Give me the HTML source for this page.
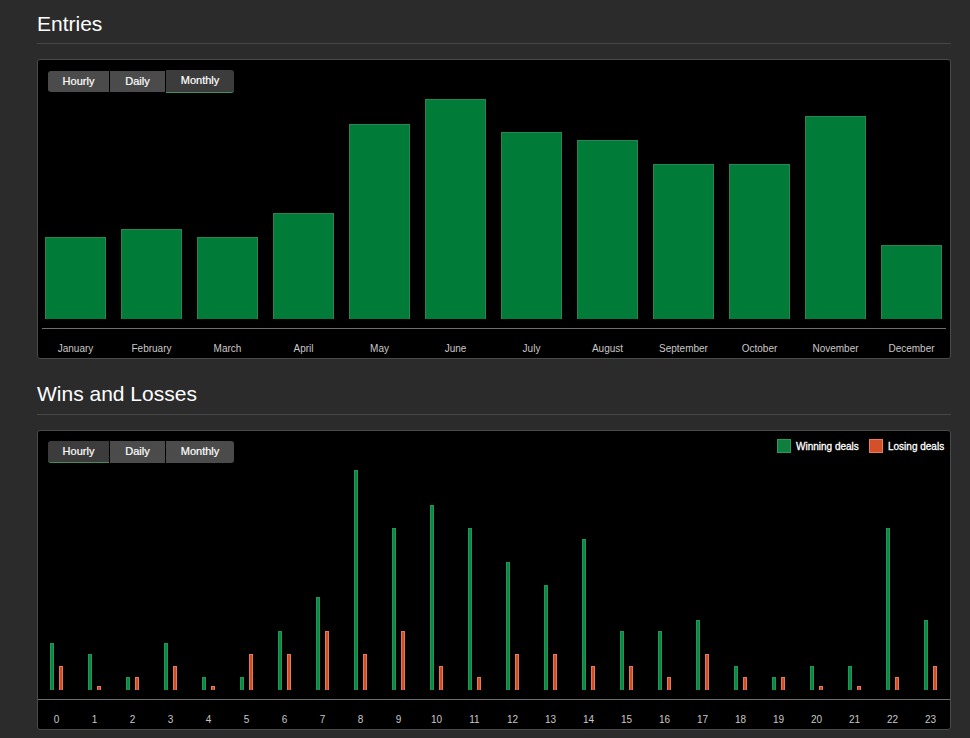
<!DOCTYPE html>
<html><head><meta charset="utf-8"><style>
*{margin:0;padding:0;box-sizing:border-box}
html,body{width:970px;height:738px;overflow:hidden;background:#2b2b2b;font-family:"Liberation Sans",sans-serif;position:relative}
.a{position:absolute}
h2{position:absolute;left:37px;font-size:21px;font-weight:normal;color:#fff;line-height:1;white-space:nowrap}
.hr{position:absolute;left:37px;width:914px;height:1px;background:#474747}
.panel{position:absolute;left:37px;width:914px;background:#000;border:1px solid #4a4a4a;border-radius:3px}
.btn{position:absolute;background:#4b4b4b;color:#fff;-webkit-text-stroke:0.2px #fff;font-size:11px;line-height:1;text-align:center;white-space:nowrap}
.btn span{position:absolute;left:0;right:0}
.btn.act{background:#3c3c3c;border-bottom:1px solid #3e9160}
.bar1{position:absolute;width:61px;background:#007b38;border:1px solid #2a8453;border-bottom:none}
.g{position:absolute;width:4px;background:#0a8a40;border:1px solid #22965a;border-bottom:none}
.o{position:absolute;width:4px;background:#cf4c25;border:1px solid #e67a52;border-bottom:none}
.lbl{position:absolute;font-size:10px;color:#c8c8c8;line-height:1;white-space:nowrap;text-align:center;width:76px}
.axis{position:absolute;height:1px;background:#6e6e6e}
</style></head><body>
<h2 style="top:13px">Entries</h2>
<div class="hr" style="top:43px"></div>
<div class="panel" style="top:59px;height:300px"></div>
<div class="btn" style="left:48px;top:71px;width:61px;height:21px;border-radius:3px 0 0 3px"><span style="top:5px">Hourly</span></div>
<div class="btn" style="left:110px;top:71px;width:55px;height:21px"><span style="top:5px">Daily</span></div>
<div class="btn act" style="left:166px;top:70px;width:68px;height:23px;border-radius:0 3px 3px 0"><span style="top:5px">Monthly</span></div>
<div class="bar1" style="left:45px;top:237px;height:82px"></div>
<div class="lbl" style="left:37.5px;top:344px">January</div>
<div class="bar1" style="left:121px;top:229px;height:90px"></div>
<div class="lbl" style="left:113.5px;top:344px">February</div>
<div class="bar1" style="left:197px;top:237px;height:82px"></div>
<div class="lbl" style="left:189.5px;top:344px">March</div>
<div class="bar1" style="left:273px;top:213px;height:106px"></div>
<div class="lbl" style="left:265.5px;top:344px">April</div>
<div class="bar1" style="left:349px;top:124px;height:195px"></div>
<div class="lbl" style="left:341.5px;top:344px">May</div>
<div class="bar1" style="left:425px;top:99px;height:220px"></div>
<div class="lbl" style="left:417.5px;top:344px">June</div>
<div class="bar1" style="left:501px;top:132px;height:187px"></div>
<div class="lbl" style="left:493.5px;top:344px">July</div>
<div class="bar1" style="left:577px;top:140px;height:179px"></div>
<div class="lbl" style="left:569.5px;top:344px">August</div>
<div class="bar1" style="left:653px;top:164px;height:155px"></div>
<div class="lbl" style="left:645.5px;top:344px">September</div>
<div class="bar1" style="left:729px;top:164px;height:155px"></div>
<div class="lbl" style="left:721.5px;top:344px">October</div>
<div class="bar1" style="left:805px;top:116px;height:203px"></div>
<div class="lbl" style="left:797.5px;top:344px">November</div>
<div class="bar1" style="left:881px;top:245px;height:74px"></div>
<div class="lbl" style="left:873.5px;top:344px">December</div>
<div class="axis" style="left:42px;top:328px;width:904px"></div>
<h2 style="top:383px">Wins and Losses</h2>
<div class="hr" style="top:414px"></div>
<div class="panel" style="top:430px;height:300px"></div>
<div class="btn act" style="left:48px;top:441px;width:61px;height:22px;border-radius:3px 0 0 3px"><span style="top:5px">Hourly</span></div>
<div class="btn" style="left:110px;top:441px;width:55px;height:22px"><span style="top:5px">Daily</span></div>
<div class="btn" style="left:166px;top:441px;width:68px;height:22px;border-radius:0 3px 3px 0"><span style="top:5px">Monthly</span></div>
<div class="a" style="left:777px;top:439px;width:14px;height:14px;background:#0e7f3e;border:1px solid #2b9a5a"></div>
<div class="a" style="left:796px;top:442px;font-size:10px;color:#fff;line-height:1;white-space:nowrap;-webkit-text-stroke:0.3px #fff">Winning deals</div>
<div class="a" style="left:869px;top:439px;width:14px;height:14px;background:#d4502a;border:1px solid #ec7d55"></div>
<div class="a" style="left:888px;top:442px;font-size:10px;color:#fff;line-height:1;white-space:nowrap;-webkit-text-stroke:0.3px #fff">Losing deals</div>
<div class="g" style="left:50px;top:643px;height:47px"></div>
<div class="o" style="left:59px;top:666px;height:24px"></div>
<div class="lbl" style="left:18.5px;top:715px">0</div>
<div class="g" style="left:88px;top:654px;height:36px"></div>
<div class="o" style="left:97px;top:686px;height:4px"></div>
<div class="lbl" style="left:56.5px;top:715px">1</div>
<div class="g" style="left:126px;top:677px;height:13px"></div>
<div class="o" style="left:135px;top:677px;height:13px"></div>
<div class="lbl" style="left:94.5px;top:715px">2</div>
<div class="g" style="left:164px;top:643px;height:47px"></div>
<div class="o" style="left:173px;top:666px;height:24px"></div>
<div class="lbl" style="left:132.5px;top:715px">3</div>
<div class="g" style="left:202px;top:677px;height:13px"></div>
<div class="o" style="left:211px;top:686px;height:4px"></div>
<div class="lbl" style="left:170.5px;top:715px">4</div>
<div class="g" style="left:240px;top:677px;height:13px"></div>
<div class="o" style="left:249px;top:654px;height:36px"></div>
<div class="lbl" style="left:208.5px;top:715px">5</div>
<div class="g" style="left:278px;top:631px;height:59px"></div>
<div class="o" style="left:287px;top:654px;height:36px"></div>
<div class="lbl" style="left:246.5px;top:715px">6</div>
<div class="g" style="left:316px;top:597px;height:93px"></div>
<div class="o" style="left:325px;top:631px;height:59px"></div>
<div class="lbl" style="left:284.5px;top:715px">7</div>
<div class="g" style="left:354px;top:470px;height:220px"></div>
<div class="o" style="left:363px;top:654px;height:36px"></div>
<div class="lbl" style="left:322.5px;top:715px">8</div>
<div class="g" style="left:392px;top:528px;height:162px"></div>
<div class="o" style="left:401px;top:631px;height:59px"></div>
<div class="lbl" style="left:360.5px;top:715px">9</div>
<div class="g" style="left:430px;top:505px;height:185px"></div>
<div class="o" style="left:439px;top:666px;height:24px"></div>
<div class="lbl" style="left:398.5px;top:715px">10</div>
<div class="g" style="left:468px;top:528px;height:162px"></div>
<div class="o" style="left:477px;top:677px;height:13px"></div>
<div class="lbl" style="left:436.5px;top:715px">11</div>
<div class="g" style="left:506px;top:562px;height:128px"></div>
<div class="o" style="left:515px;top:654px;height:36px"></div>
<div class="lbl" style="left:474.5px;top:715px">12</div>
<div class="g" style="left:544px;top:585px;height:105px"></div>
<div class="o" style="left:553px;top:654px;height:36px"></div>
<div class="lbl" style="left:512.5px;top:715px">13</div>
<div class="g" style="left:582px;top:539px;height:151px"></div>
<div class="o" style="left:591px;top:666px;height:24px"></div>
<div class="lbl" style="left:550.5px;top:715px">14</div>
<div class="g" style="left:620px;top:631px;height:59px"></div>
<div class="o" style="left:629px;top:666px;height:24px"></div>
<div class="lbl" style="left:588.5px;top:715px">15</div>
<div class="g" style="left:658px;top:631px;height:59px"></div>
<div class="o" style="left:667px;top:677px;height:13px"></div>
<div class="lbl" style="left:626.5px;top:715px">16</div>
<div class="g" style="left:696px;top:620px;height:70px"></div>
<div class="o" style="left:705px;top:654px;height:36px"></div>
<div class="lbl" style="left:664.5px;top:715px">17</div>
<div class="g" style="left:734px;top:666px;height:24px"></div>
<div class="o" style="left:743px;top:677px;height:13px"></div>
<div class="lbl" style="left:702.5px;top:715px">18</div>
<div class="g" style="left:772px;top:677px;height:13px"></div>
<div class="o" style="left:781px;top:677px;height:13px"></div>
<div class="lbl" style="left:740.5px;top:715px">19</div>
<div class="g" style="left:810px;top:666px;height:24px"></div>
<div class="o" style="left:819px;top:686px;height:4px"></div>
<div class="lbl" style="left:778.5px;top:715px">20</div>
<div class="g" style="left:848px;top:666px;height:24px"></div>
<div class="o" style="left:857px;top:686px;height:4px"></div>
<div class="lbl" style="left:816.5px;top:715px">21</div>
<div class="g" style="left:886px;top:528px;height:162px"></div>
<div class="o" style="left:895px;top:677px;height:13px"></div>
<div class="lbl" style="left:854.5px;top:715px">22</div>
<div class="g" style="left:924px;top:620px;height:70px"></div>
<div class="o" style="left:933px;top:666px;height:24px"></div>
<div class="lbl" style="left:892.5px;top:715px">23</div>
<div class="axis" style="left:38px;top:699px;width:912px"></div>
</body></html>
